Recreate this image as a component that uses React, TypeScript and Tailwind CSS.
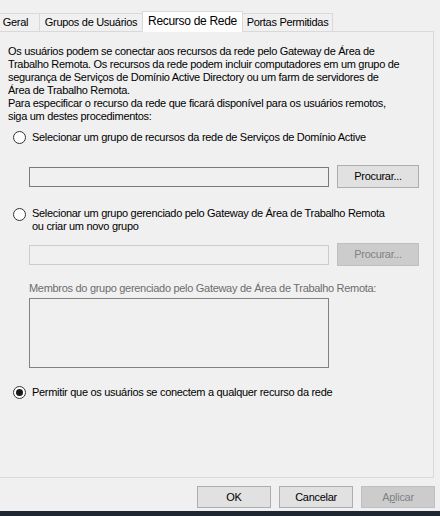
const font = "font-['Liberation_Sans','Arial',sans-serif]";

function Radio({ checked = false }: { checked?: boolean }) {
  return (
    <div className="w-[13px] h-[13px] rounded-full border border-[#333333] bg-white flex items-center justify-center shrink-0">
      {checked && <div className="w-[7px] h-[7px] rounded-full bg-[#1a1a1a]" />}
    </div>
  );
}

function Button({ label, disabled = false, w = 'w-[82px]', h = 'h-[23px]' }: { label: React.ReactNode; disabled?: boolean; w?: string; h?: string }) {
  return (
    <div
      className={
        disabled
          ? `${w} ${h} shrink-0 flex items-center justify-center border border-[#bfbfbf] bg-[#cccccc] text-[#838383]`
          : `${w} ${h} shrink-0 flex items-center justify-center border border-[#adadad] bg-[#e1e1e1] text-black`
      }
    >
      {label}
    </div>
  );
}

function Tab({ label, selected = false, w }: { label: string; selected?: boolean; w: string }) {
  if (selected) {
    return (
      <div className={`${w} h-[21px] -mb-px -ml-px bg-white border-l border-t border-r border-[#d9d9d9] flex items-center justify-center text-[12px] pb-[1px]`}>
        {label}
      </div>
    );
  }
  return (
    <div className={`${w} h-[18px] border-t border-r border-[#d9d9d9] flex items-center justify-center`}>
      {label}
    </div>
  );
}

export default function App() {
  return (
    <div className={`w-[440px] h-[516px] bg-[#f0f0f0] flex flex-col overflow-hidden text-[11px] leading-[13px] tracking-[-0.3px] text-black ${font}`}>
      <div className="h-[31px] flex items-end relative z-10 shrink-0">
        <div className="w-[48px] -ml-[8px] h-[18px] border-t border-r border-[#d9d9d9] flex items-center justify-center">Geral</div>
        <Tab label="Grupos de Usuários" w="w-[103px]" />
        <Tab label="Recurso de Rede" w="w-[101px]" selected />
        <Tab label="Portas Permitidas" w="w-[90px]" />
      </div>

      <div className="w-[434px] h-[447px] shrink-0 border-t border-r border-b border-[#d9d9d9] flex flex-col pl-[8px] pt-[13px]">
        <p className="whitespace-nowrap">
          Os usuários podem se conectar aos recursos da rede pelo Gateway de Área de
          <br />
          Trabalho Remota. Os recursos da rede podem incluir computadores em um grupo de
          <br />
          segurança de Serviços de Domínio Active Directory ou um farm de servidores de
          <br />
          Área de Trabalho Remota.
        </p>
        <p className="whitespace-nowrap">
          Para especificar o recurso da rede que ficará disponível para os usuários remotos,
          <br />
          siga um destes procedimentos:
        </p>

        <div className="mt-[7px] h-[14px] flex items-center gap-[6px] pl-[5px]">
          <Radio />
          <span>Selecionar um grupo de recursos da rede de Serviços de Domínio Active</span>
        </div>

        <div className="mt-[21px] h-[23px] flex items-center pl-[21px] gap-[8px]">
          <div className="w-[300px] h-[20px] border border-[#7a7a7a] bg-[#f0f0f0]" />
          <Button label="Procurar..." />
        </div>

        <div className="mt-[19px] flex items-start gap-[6px] pl-[5px]">
          <div className="mt-[1px]">
            <Radio />
          </div>
          <span>
            Selecionar um grupo gerenciado pelo Gateway de Área de Trabalho Remota
            <br />
            ou criar um novo grupo
          </span>
        </div>

        <div className="mt-[10px] h-[23px] flex items-center pl-[21px] gap-[8px]">
          <div className="w-[300px] h-[20px] border border-[#cccccc] bg-[#f0f0f0]" />
          <Button label="Procurar..." disabled />
        </div>

        <div className="mt-[16px] pl-[21px] text-[#6d6d6d]">
          Membros do grupo gerenciado pelo Gateway de Área de Trabalho Remota:
        </div>
        <div className="mt-[3px] ml-[21px] w-[300px] h-[70px] border border-[#828282] bg-[#f0f0f0]" />

        <div className="mt-[17px] h-[14px] flex items-center gap-[6px] pl-[5px]">
          <Radio checked />
          <span>Permitir que os usuários se conectem a qualquer recurso da rede</span>
        </div>
      </div>

      <div className="flex-1 flex justify-end items-start gap-[8px] pt-[8px] pr-[5px]">
        <Button label="OK" w="w-[74px]" h="h-[22px]" />
        <Button label="Cancelar" w="w-[74px]" h="h-[22px]" />
        <Button
          label={
            <span>
              A<span className="underline">p</span>licar
            </span>
          }
          w="w-[74px]"
          h="h-[22px]"
          disabled
        />
      </div>
      <div className="h-[5px] shrink-0 bg-[#1f2733]" />
    </div>
  );
}
